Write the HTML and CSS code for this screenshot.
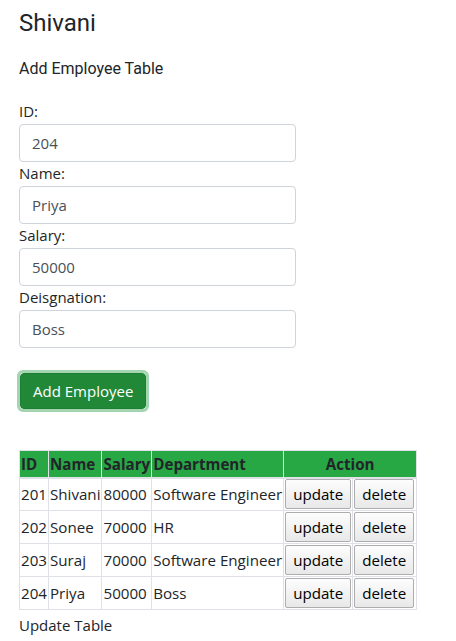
FILE: index.html
```html
<!DOCTYPE html>
<html>
<head>
<meta charset="utf-8">
<link rel="stylesheet" href="styles.css">
</head>
<body>
<div class="page">
  <h3 class="title">Shivani</h3>
  <p class="subtitle">Add Employee Table</p>
  <form class="form">
    <label class="lbl">ID:</label>
    <input class="inp" value="204">
    <label class="lbl">Name:</label>
    <input class="inp" value="Priya">
    <label class="lbl">Salary:</label>
    <input class="inp" value="50000">
    <label class="lbl">Deisgnation:</label>
    <input class="inp" value="Boss">
    <div class="btn-wrap"><button type="button" class="btn-add">Add Employee</button></div>
  </form>
  <table class="tbl">
    <thead>
      <tr><th>ID</th><th>Name</th><th>Salary</th><th>Department</th><th colspan="2">Action</th></tr>
    </thead>
    <tbody>
      <tr><td>201</td><td>Shivani</td><td>80000</td><td>Software Engineer</td><td class="act"><button class="b">update</button></td><td class="act"><button class="b">delete</button></td></tr>
      <tr><td>202</td><td>Sonee</td><td>70000</td><td>HR</td><td class="act"><button class="b">update</button></td><td class="act"><button class="b">delete</button></td></tr>
      <tr><td>203</td><td>Suraj</td><td>70000</td><td>Software Engineer</td><td class="act"><button class="b">update</button></td><td class="act"><button class="b">delete</button></td></tr>
      <tr><td>204</td><td>Priya</td><td>50000</td><td>Boss</td><td class="act"><button class="b">update</button></td><td class="act"><button class="b">delete</button></td></tr>
    </tbody>
  </table>
  <p class="foot">Update Table</p>
</div>
</body>
</html>
```
FILE: styles.css
```css
* { box-sizing: border-box; }
body { margin: 0; background: #fff; color: #212529; font-family: "Open Sans", "Noto Sans", sans-serif; font-size: 15px; }
.page { padding: 0 19px; }
.title { font-family: Roboto, sans-serif; font-weight: 400; font-size: 24px; line-height: 28px; margin: 9px 0 0; }
.subtitle { font-family: Roboto, sans-serif; font-size: 16px; line-height: 20px; margin: 22px 0 0; }
.form { display: flex; flex-direction: column; align-items: flex-start; margin-top: 21px; }
.lbl { line-height: 22px; margin-bottom: 2px; }
.inp { width: 277px; height: 38px; border: 1px solid #ced4da; border-radius: 4px; padding: 0 12px; font: inherit; color: #495057; margin-bottom: 0; }
.btn-wrap { margin-top: 22px; margin-left: -2px; border: 3px solid #a3d5b0; border-radius: 6px; }
.btn-add { display: block; background: #218838; color: #fff; border: 1px solid #1e7e34; border-radius: 4px; font: inherit; font-size: 15px; height: 36px; padding: 0 12px; }
.tbl { border-collapse: collapse; margin-top: 38px; font-size: 15.15px; }
.tbl th, .tbl td { border: 1px solid #dee2e6; padding: 0 1px; text-align: left; height: 33px; white-space: nowrap; }
.tbl th { background: #28a745; font-weight: 700; height: 27px; border-bottom: 2px solid #dee2e6; }
.tbl th[colspan] { text-align: center; }
.tbl td.act { padding: 0 1px; }
.tbl td.act:last-child { padding-right: 2px; }
.b { font: inherit; color: #000; height: 30px; padding: 0 7px; border: 1px solid #adadad; border-radius: 2px; background: linear-gradient(#fdfdfd, #e8e8e8); }
.foot { margin: 4px 0 0; line-height: 22px; }
```
